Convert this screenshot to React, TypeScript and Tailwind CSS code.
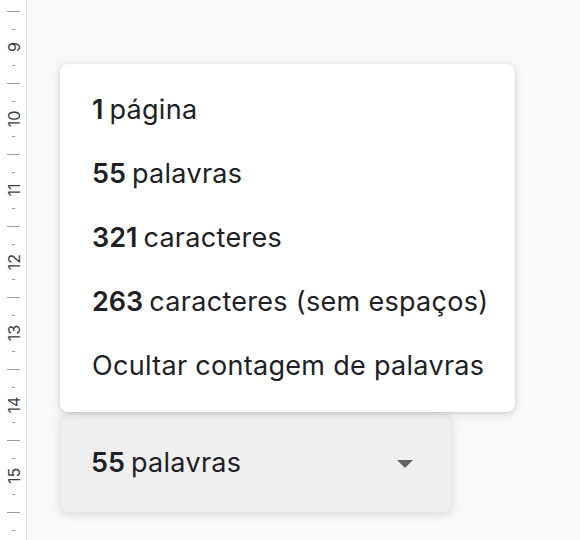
import React from 'react';

const FONT = { fontFamily: 'Inter, "Open Sans", Arial, sans-serif' };

// cm marks shown on the vertical ruler
const MARKS = [9, 10, 11, 12, 13, 14, 15];

const Ruler = () => {
  const unit = 71.5;
  const first = 47;
  const ticks: { y: number; long: boolean }[] = [];
  for (let i = -1; i < MARKS.length; i++) {
    const base = first + i * unit;
    ticks.push({ y: base + unit * 0.25, long: false });
    ticks.push({ y: base + unit * 0.5, long: true });
    ticks.push({ y: base + unit * 0.75, long: false });
  }
  return (
    <div className="relative w-[27px] h-full bg-white border-r border-[#dadce0] shrink-0 overflow-hidden">
      {ticks.map((t, i) => (
        <div
          key={i}
          className={`absolute h-px bg-[#9aa0a6] ${t.long ? 'left-[7px] w-[13px]' : 'left-[12px] w-[3px]'}`}
          style={{ top: t.y }}
        />
      ))}
      {MARKS.map((m, i) => (
        <div
          key={m}
          className="absolute left-[14px] text-[16px] leading-none text-[#3c4043]"
          style={{ top: first + i * unit, transform: 'translate(-50%, -50%) rotate(-90deg)' }}
        >
          {m}
        </div>
      ))}
    </div>
  );
};

const MenuItem = ({ bold, rest }: { bold?: string; rest: string }) => (
  <div className="h-16 flex items-center px-[32px] whitespace-nowrap">
    {bold && <span className="font-semibold tracking-normal mr-[6px]">{bold}</span>}
    <span>{rest}</span>
  </div>
);

export default function App() {
  return (
    <div className="w-[580px] h-[540px] flex bg-[#f8f9fa] overflow-hidden text-[#202124]" style={FONT}>
      <Ruler />
      <div className="flex-1 pl-[33px] pt-[64px] flex flex-col">
        <div className="w-[455px] bg-white rounded-lg shadow-[0_2px_8px_rgba(60,64,67,0.18),0_1px_3px_rgba(60,64,67,0.12)] py-[14px] text-[27px] tracking-[0.3px] relative z-10">
          <MenuItem bold="1" rest="página" />
          <MenuItem bold="55" rest="palavras" />
          <MenuItem bold="321" rest="caracteres" />
          <MenuItem bold="263" rest="caracteres (sem espaços)" />
          <MenuItem rest="Ocultar contagem de palavras" />
        </div>
        <div className="w-[392px] h-[99px] mt-[2px] bg-[#efefef] rounded-lg border border-[#e6e6e6] shadow-[0_2px_8px_rgba(60,64,67,0.18)] flex items-center justify-between pl-[30px] pr-[38px] text-[27px] tracking-[0.3px]">
          <div className="whitespace-nowrap">
            <span className="font-semibold tracking-normal mr-[6px]">55</span>
            <span>palavras</span>
          </div>
          <svg width="16" height="8" viewBox="0 0 16 8">
            <path d="M0 0 L16 0 L8 8 Z" fill="#5f6368" />
          </svg>
        </div>
      </div>
    </div>
  );
}
